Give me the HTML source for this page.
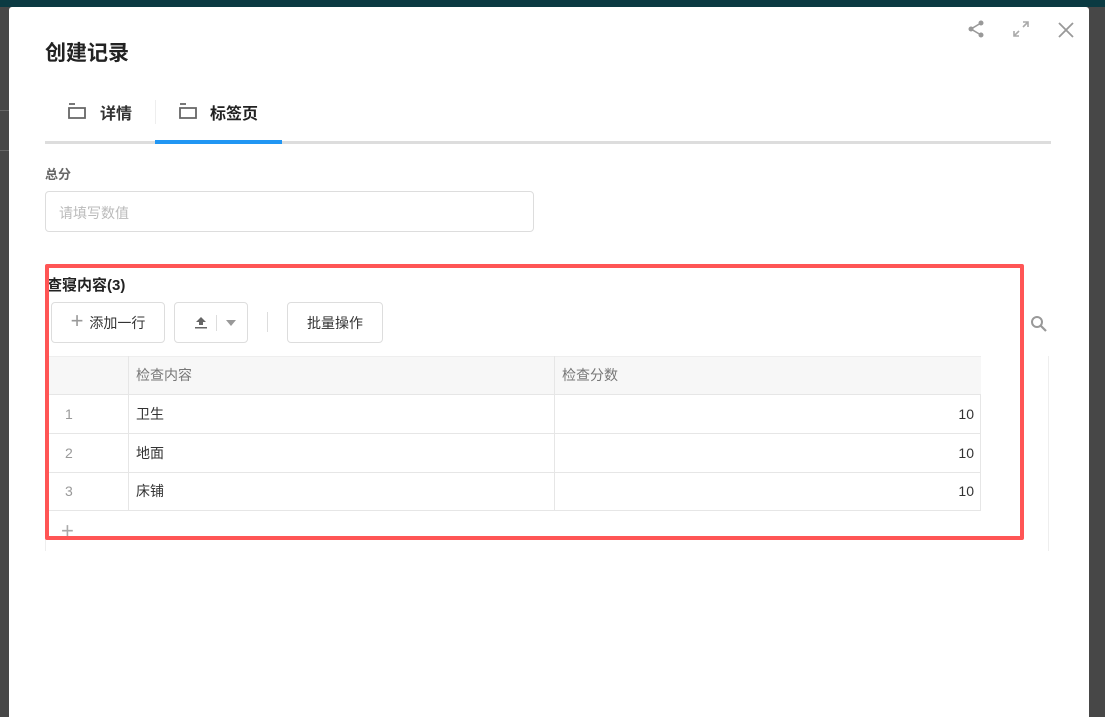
<!DOCTYPE html><html><head><meta charset="utf-8"><style>
*{margin:0;padding:0;box-sizing:border-box}
body{width:1105px;height:710px;overflow:hidden;background:#474747;font-family:"Liberation Sans","Noto Sans CJK SC",sans-serif;position:relative;color:#333}
.a{position:absolute}
.btn{position:absolute;border:1px solid #ddd;border-radius:4px;background:#fff;font-size:14px;color:#333;display:flex;align-items:center;justify-content:center}
.cell{position:absolute;font-size:14px;display:flex;align-items:center}
</style></head><body>
<div class="a" style="left:0;top:0;width:1105px;height:7px;background:#0b3a42"></div>
<div class="a" style="left:0;top:110px;width:9px;height:1px;background:#666"></div>
<div class="a" style="left:0;top:150px;width:9px;height:1px;background:#666"></div>
<div class="a" style="left:9px;top:7px;width:1080px;height:710px;background:#fff;border-radius:3px 3px 0 0"></div>
<div class="a" style="left:45px;top:37px;font-size:21px;font-weight:bold;color:#222">创建记录</div>
<svg class="a" style="left:966px;top:19px" width="20" height="20" viewBox="0 0 20 20"><circle cx="15" cy="4" r="2.5" fill="#999"/><circle cx="5" cy="10" r="2.5" fill="#999"/><circle cx="15" cy="16" r="2.5" fill="#999"/><path d="M15 4L5 10L15 16" stroke="#999" stroke-width="1.6" fill="none"/></svg>
<svg class="a" style="left:1011px;top:19px" width="20" height="20" viewBox="0 0 20 20"><path d="M12 3h5v5M17 3l-5 5M8 17H3v-5M3 17l5-5" stroke="#aaa" stroke-width="1.6" fill="none"/></svg>
<svg class="a" style="left:1057px;top:21px" width="18" height="18" viewBox="0 0 18 18"><path d="M2 2L16 16M16 2L2 16" stroke="#999" stroke-width="1.8"/></svg>
<svg class="a" style="left:68px;top:103px" width="18" height="16" viewBox="0 0 18 16"><path d="M1 1h6M1 5h16v10H1z" stroke="#666" stroke-width="1.8" fill="none"/></svg>
<div class="a" style="left:100px;top:100px;font-size:16px;font-weight:bold;color:#333">详情</div>
<div class="a" style="left:155px;top:100px;width:1px;height:24px;background:#eee"></div>
<svg class="a" style="left:179px;top:103px" width="18" height="16" viewBox="0 0 18 16"><path d="M1 1h6M1 5h16v10H1z" stroke="#666" stroke-width="1.8" fill="none"/></svg>
<div class="a" style="left:210px;top:100px;font-size:16px;font-weight:bold;color:#222">标签页</div>
<div class="a" style="left:45px;top:141px;width:1006px;height:3px;background:#ddd"></div>
<div class="a" style="left:155px;top:140px;width:127px;height:4px;background:#2196f3"></div>
<div class="a" style="left:45px;top:164px;font-size:13px;font-weight:bold;color:#666">总分</div>
<div class="a" style="left:45px;top:191px;width:489px;height:41px;border:1px solid #ddd;border-radius:4px;font-size:14px;color:#bbb;padding:11px 13px">请填写数值</div>
<div class="a" style="left:47px;top:274px;font-size:15px;font-weight:bold;color:#222">查寝内容(3)</div>
<div class="btn" style="left:51px;top:302px;width:114px;height:41px"><span style="color:#999;font-size:22px;font-weight:300;margin-right:6px;margin-top:-3px">+</span>添加一行</div>
<div class="btn" style="left:174px;top:302px;width:74px;height:41px"><svg width="74" height="41"><path d="M21 20l5-5 5 5h-3v3h-4v-3z" fill="#666"/><rect x="20" y="25" width="12" height="1.5" fill="#666"/><rect x="41" y="13" width="1" height="16" fill="#ddd"/><path d="M51 18h10l-5 6z" fill="#999"/></svg></div>
<div class="a" style="left:267px;top:312px;width:1px;height:20px;background:#ddd"></div>
<div class="btn" style="left:287px;top:302px;width:96px;height:41px">批量操作</div>
<svg class="a" style="left:1030px;top:315px" width="18" height="18" viewBox="0 0 18 18"><circle cx="7" cy="7" r="5" stroke="#999" stroke-width="2" fill="none"/><path d="M11 11l5 5" stroke="#999" stroke-width="2.2"/></svg>
<div class="a" style="left:45px;top:356px;width:1004px;height:195px;border-right:1px solid #eee;border-left:1px solid #eee"></div>
<div class="a" style="left:45px;top:356px;width:936px;height:38px;background:#f7f7f7;border-top:1px solid #eee"></div>
<div class="a" style="left:45px;top:394px;width:936px;height:116px;border-right:1px solid #e6e6e6"></div>
<div class="a" style="left:45px;top:394px;width:936px;height:1px;background:#e6e6e6"></div>
<div class="a" style="left:45px;top:433px;width:936px;height:1px;background:#e6e6e6"></div>
<div class="a" style="left:45px;top:472px;width:936px;height:1px;background:#e6e6e6"></div>
<div class="a" style="left:45px;top:510px;width:936px;height:1px;background:#e6e6e6"></div>
<div class="a" style="left:128px;top:356px;width:1px;height:154px;background:#e6e6e6"></div>
<div class="a" style="left:554px;top:356px;width:1px;height:154px;background:#e6e6e6"></div>
<div class="cell" style="left:136px;top:356px;height:38px;color:#777">检查内容</div>
<div class="cell" style="left:562px;top:356px;height:38px;color:#777">检查分数</div>
<div class="cell" style="left:65px;top:394px;height:39px;color:#999">1</div>
<div class="cell" style="left:136px;top:394px;height:39px">卫生</div>
<div class="cell" style="left:555px;top:394px;height:39px;width:419px;justify-content:flex-end">10</div>
<div class="cell" style="left:65px;top:433px;height:39px;color:#999">2</div>
<div class="cell" style="left:136px;top:433px;height:39px">地面</div>
<div class="cell" style="left:555px;top:433px;height:39px;width:419px;justify-content:flex-end">10</div>
<div class="cell" style="left:65px;top:472px;height:38px;color:#999">3</div>
<div class="cell" style="left:136px;top:472px;height:38px">床铺</div>
<div class="cell" style="left:555px;top:472px;height:38px;width:419px;justify-content:flex-end">10</div>
<div class="a" style="left:61px;top:518px;font-size:22px;color:#aaa;font-weight:300">+</div>
<div class="a" style="left:45px;top:264px;width:979px;height:276px;border:4px solid #f55;border-radius:2px"></div>
</body></html>
